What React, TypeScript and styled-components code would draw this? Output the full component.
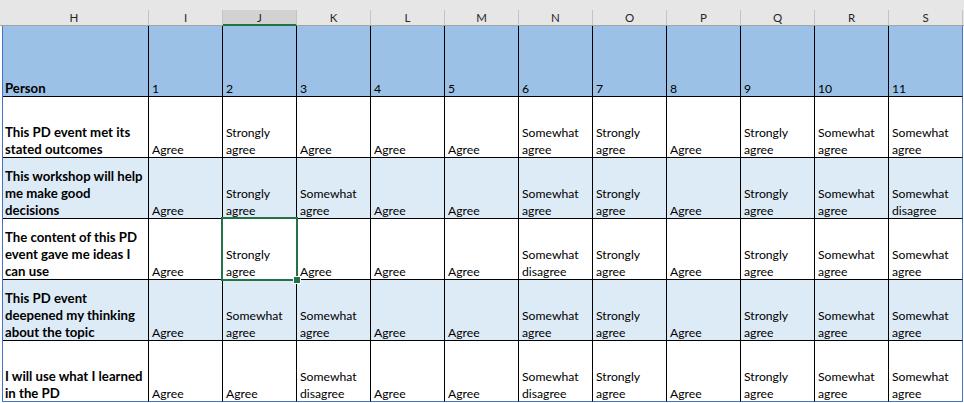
import React from "react";
import styled, { createGlobalStyle, css } from "styled-components";

const GlobalStyle = createGlobalStyle`
  html, body {
    margin: 0;
    padding: 0;
    background: #ffffff;
    overflow: hidden;
  }
  body {
    font-family: Lato, "Liberation Sans", sans-serif;
    color: #000;
  }
`;

const letters = ["H", "I", "J", "K", "L", "M", "N", "O", "P", "Q", "R", "S"];

type Row = { label: string[]; answers: string[] };

const rows: Row[] = [
  {
    label: ["This PD event met its", "stated outcomes"],
    answers: ["Agree", "Strongly agree", "Agree", "Agree", "Agree", "Somewhat agree", "Strongly agree", "Agree", "Strongly agree", "Somewhat agree", "Somewhat agree"],
  },
  {
    label: ["This workshop will help", "me make good", "decisions"],
    answers: ["Agree", "Strongly agree", "Somewhat agree", "Agree", "Agree", "Somewhat agree", "Strongly agree", "Agree", "Strongly agree", "Somewhat agree", "Somewhat disagree"],
  },
  {
    label: ["The content of this PD", "event gave me ideas I", "can use"],
    answers: ["Agree", "Strongly agree", "Agree", "Agree", "Agree", "Somewhat disagree", "Strongly agree", "Agree", "Strongly agree", "Somewhat agree", "Somewhat agree"],
  },
  {
    label: ["This PD event", "deepened my thinking", "about the topic"],
    answers: ["Agree", "Somewhat agree", "Somewhat agree", "Agree", "Agree", "Somewhat agree", "Strongly agree", "Agree", "Strongly agree", "Somewhat agree", "Somewhat agree"],
  },
  {
    label: ["I will use what I learned", "in the PD"],
    answers: ["Agree", "Agree", "Somewhat disagree", "Agree", "Agree", "Somewhat disagree", "Strongly agree", "Agree", "Strongly agree", "Somewhat agree", "Somewhat agree"],
  },
];

// selected cell: column J, third answer row
const SEL_COL = 1;
const SEL_ROW = 2;

export default function App() {
  return (
    <Page>
      <GlobalStyle />
      <ColumnBar>
        {letters.map((l, i) => (
          <ColumnHead key={l} $selected={i === SEL_COL + 1}>
            {l}
          </ColumnHead>
        ))}
      </ColumnBar>
      <Sheet>
        <Cell $band="header" $label $height={71}>
          <Line>Person</Line>
        </Cell>
        {rows[0].answers.map((_, i) => (
          <Cell key={i} $band="header" $height={71} $last={i === 10}>
            <Line>{i + 1}</Line>
          </Cell>
        ))}
        {rows.map((r, ri) => (
          <React.Fragment key={ri}>
            <Cell $band={ri % 2 ? "even" : "odd"} $label $height={61} $lastRow={ri === rows.length - 1}>
              {r.label.map((t) => (
                <Line key={t}>{t}</Line>
              ))}
            </Cell>
            {r.answers.map((a, ci) => (
              <Cell
                key={ci}
                $band={ri % 2 ? "even" : "odd"}
                $height={61}
                $last={ci === 10}
                $lastRow={ri === rows.length - 1}
              >
                {a.split(" ").map((w, wi) => (
                  <Line key={wi}>{w}</Line>
                ))}
                {ri === SEL_ROW && ci === SEL_COL && (
                  <Selection>
                    <Handle />
                  </Selection>
                )}
              </Cell>
            ))}
          </React.Fragment>
        ))}
      </Sheet>
    </Page>
  );
}

const Page = styled.div`
  width: 964px;
  height: 403px;
  background: #ffffff;
  overflow: hidden;
`;

// column letter strip
const ColumnBar = styled.div`
  display: grid;
  grid-template-columns: 149px repeat(11, 74px);
  height: 26px;
  padding-top: 10px;
  box-sizing: border-box;
  background: #e6e6e6;
  border-bottom: 1px solid #a3a3a3;
`;

const ColumnHead = styled.div<{ $selected?: boolean }>`
  display: flex;
  align-items: center;
  justify-content: center;
  box-sizing: border-box;
  height: 15px;
  font-size: 11.5px;
  color: #262626;
  border-right: 1px solid #c4c4c4;
  ${(p) =>
    p.$selected &&
    css`
      background: #d2d2d2;
      border-bottom: 2px solid #217346;
      margin-bottom: -1px;
      height: 16px;
      color: #1e1e1e;
    `}
`;

// the sheet body
const Sheet = styled.div`
  display: grid;
  grid-template-columns: 146px repeat(11, 74px);
  margin-left: 2px;
  border-left: 1px solid #4472c4;
  width: max-content;
`;

const bands = {
  header: "#9bc2e6",
  odd: "#ffffff",
  even: "#ddebf7",
};

const Cell = styled.div<{
  $band: keyof typeof bands;
  $label?: boolean;
  $height: number;
  $last?: boolean;
  $lastRow?: boolean;
}>`
  position: relative;
  display: flex;
  flex-direction: column;
  justify-content: flex-end;
  box-sizing: border-box;
  height: ${(p) => p.$height}px;
  padding: 0 0 0 ${(p) => (p.$label ? 2 : 3)}px;
  background: ${(p) => bands[p.$band]};
  border-right: 1px solid ${(p) => (p.$last ? "#4472c4" : "#000")};
  border-bottom: 1px solid ${(p) => (p.$lastRow ? "#4472c4" : "#000")};
  font-size: ${(p) => (p.$label ? 13.2 : 12.2)}px;
  font-weight: ${(p) => (p.$label ? 700 : 400)};
  white-space: nowrap;
`;

const Line = styled.span`
  display: block;
  height: 17px;
  line-height: 19px;
`;

// active cell outline
const Selection = styled.div`
  position: absolute;
  left: -2px;
  top: -2px;
  right: -2px;
  bottom: -2px;
  border: 2px solid #217346;
  pointer-events: none;
  z-index: 2;
`;

const Handle = styled.div`
  position: absolute;
  right: -5px;
  bottom: -5px;
  width: 6px;
  height: 6px;
  background: #217346;
  border: 1px solid #ffffff;
  box-sizing: content-box;
`;
